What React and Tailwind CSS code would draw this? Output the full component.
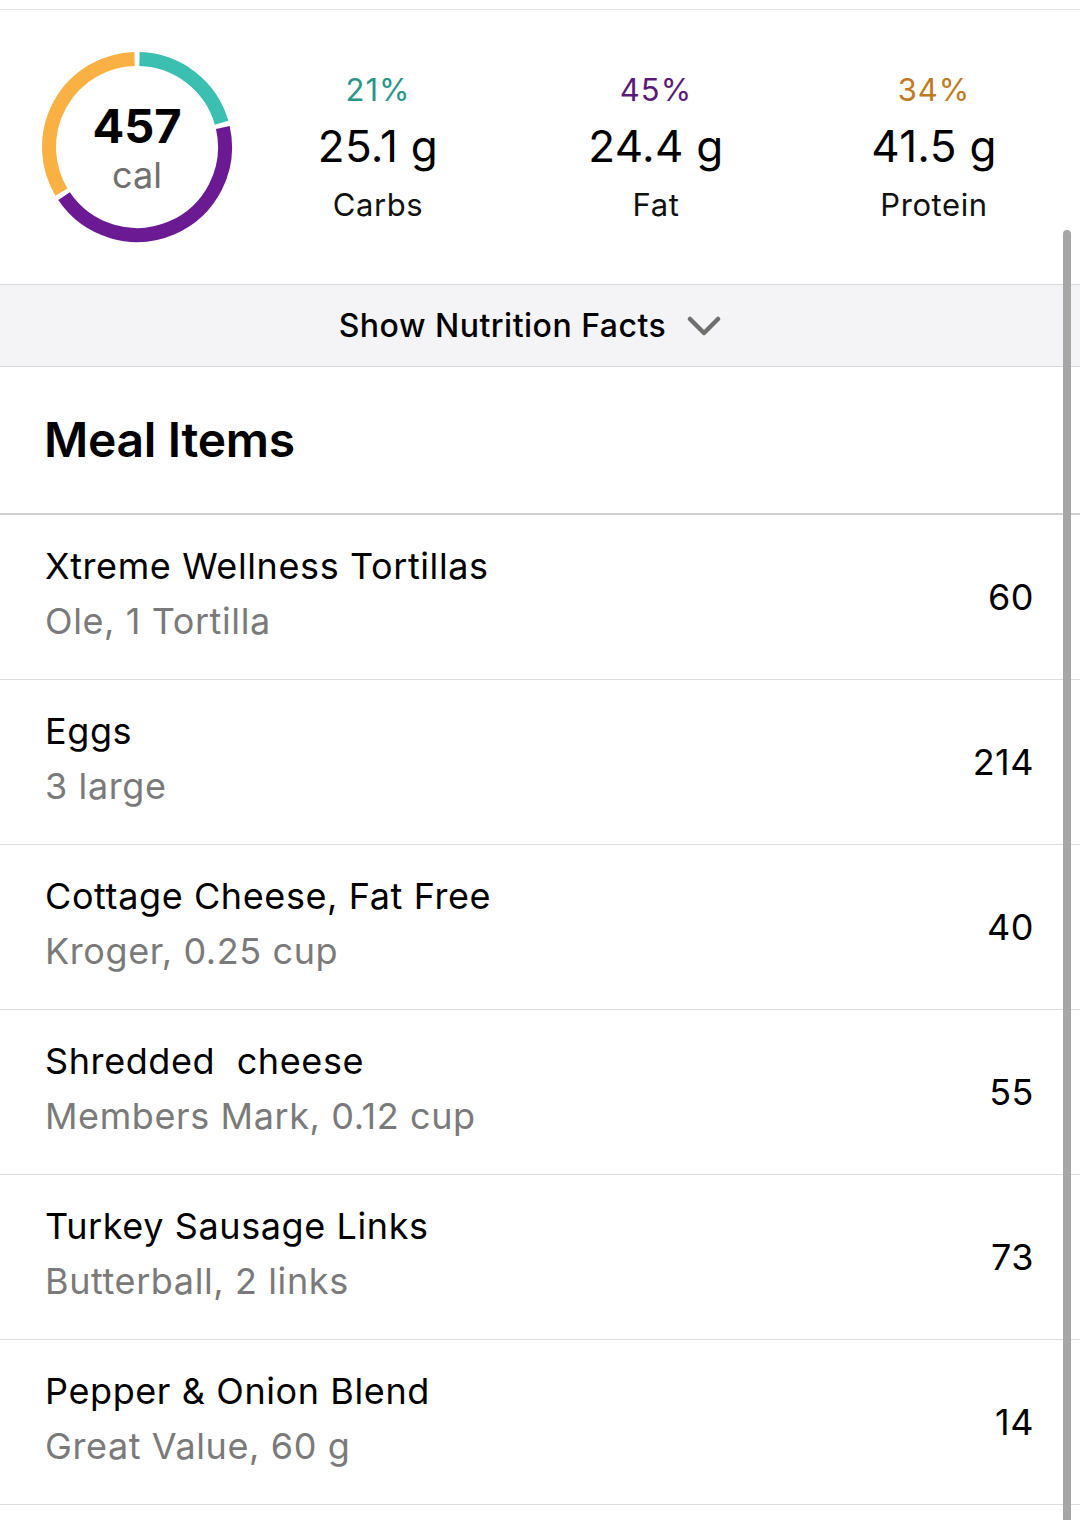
import React from 'react';

const font = { fontFamily: 'Inter, "Noto Sans", sans-serif' };

const macros = [
  { pct: '21%', grams: '25.1 g', label: 'Carbs', color: 'text-[#2b958a]' },
  { pct: '45%', grams: '24.4 g', label: 'Fat', color: 'text-[#5a1a78]' },
  { pct: '34%', grams: '41.5 g', label: 'Protein', color: 'text-[#bf7a22]' },
];

const items = [
  { name: 'Xtreme Wellness Tortillas', detail: 'Ole, 1 Tortilla', cal: 60 },
  { name: 'Eggs', detail: '3 large', cal: 214 },
  { name: 'Cottage Cheese, Fat Free', detail: 'Kroger, 0.25 cup', cal: 40 },
  { name: 'Shredded  cheese', detail: 'Members Mark, 0.12 cup', cal: 55 },
  { name: 'Turkey Sausage Links', detail: 'Butterball, 2 links', cal: 73 },
  { name: 'Pepper & Onion Blend', detail: 'Great Value, 60 g', cal: 14 },
];

const arc = (cx, cy, r, a0, a1) => {
  const p = (a) => {
    const rad = ((a - 90) * Math.PI) / 180;
    return [cx + r * Math.cos(rad), cy + r * Math.sin(rad)];
  };
  const [x0, y0] = p(a0);
  const [x1, y1] = p(a1);
  const large = a1 - a0 > 180 ? 1 : 0;
  return `M ${x0} ${y0} A ${r} ${r} 0 ${large} 1 ${x1} ${y1}`;
};

const CalorieRing = () => {
  const gap = 1.6;
  const segs = [
    { from: 0, to: 75.6, color: '#3bbfb1' },
    { from: 75.6, to: 237.6, color: '#6b1a93' },
    { from: 237.6, to: 360, color: '#f9b144' },
  ];
  return (
    <div className="relative w-[200px] h-[200px]">
      <svg width="200" height="200" viewBox="0 0 200 200">
        {segs.map((s) => (
          <path
            key={s.color}
            d={arc(100, 100, 88, s.from + gap, s.to - gap)}
            fill="none"
            stroke={s.color}
            strokeWidth="14"
          />
        ))}
      </svg>
      <div className="absolute inset-0 flex flex-col items-center justify-center">
        <span className="text-[47px] font-bold leading-none text-black mt-[2px]">457</span>
        <span className="text-[36px] leading-none text-[#707070] mt-[8px]">cal</span>
      </div>
    </div>
  );
};

export default function App() {
  return (
    <div className="relative w-[1080px] h-[1520px] bg-white overflow-hidden" style={font}>
      <div className="h-[9px]" />
      <div className="border-t border-[#e4e4e4]" />

      {/* summary */}
      <div className="grid grid-cols-[239px_278px_278px_278px] items-center h-[274px]">
        <div className="pl-[37px] -mt-[1px]">
          <CalorieRing />
        </div>
        {macros.map((m) => (
          <div key={m.label} className="flex flex-col items-center">
            <span className={`text-[31px] leading-none tracking-[1px] ${m.color}`}>{m.pct}</span>
            <span className="text-[44px] leading-none text-black mt-[19px] tracking-[0.3px]">{m.grams}</span>
            <span className="text-[31px] leading-none text-[#111] mt-[21px] tracking-[0.6px]">{m.label}</span>
          </div>
        ))}
      </div>

      {/* nutrition facts toggle */}
      <div className="h-[83px] bg-[#f4f4f6] border-y border-[#d8d8da] flex items-center justify-center gap-[21px]">
        <span className="text-[32px] font-medium text-black tracking-[0.5px] -ml-[20px]">Show Nutrition Facts</span>
        <svg width="34" height="22" viewBox="0 0 34 22" fill="none">
          <path d="M3 4 L17 18 L31 4" stroke="#6f6f6f" strokeWidth="4.5" strokeLinecap="round" strokeLinejoin="round" />
        </svg>
      </div>

      {/* meal items */}
      <div className="h-[148px] flex items-center px-[44px] border-b-2 border-[#d0d0d0]">
        <h2 className="text-[48px] font-semibold text-black tracking-[-0.3px]">Meal Items</h2>
      </div>

      <div>
        {items.map((it) => (
          <div key={it.name} className="h-[165px] flex items-center justify-between pl-[45px] pr-[46px] border-b border-[#dcdcdc]">
            <div className="flex flex-col -mt-[8px]">
              <span className="text-[36px] leading-none text-black whitespace-pre tracking-[0.6px]">{it.name}</span>
              <span className="text-[36px] leading-none text-[#7a7a7a] mt-[19px] tracking-[0.6px]">{it.detail}</span>
            </div>
            <span className="text-[36px] leading-none text-black tracking-[0.5px]">{it.cal}</span>
          </div>
        ))}
      </div>

      {/* scroll indicator */}
      <div className="absolute left-[1063px] top-[230px] w-[8px] h-[1300px] rounded-full bg-[#a6a6a6]" />
    </div>
  );
}
